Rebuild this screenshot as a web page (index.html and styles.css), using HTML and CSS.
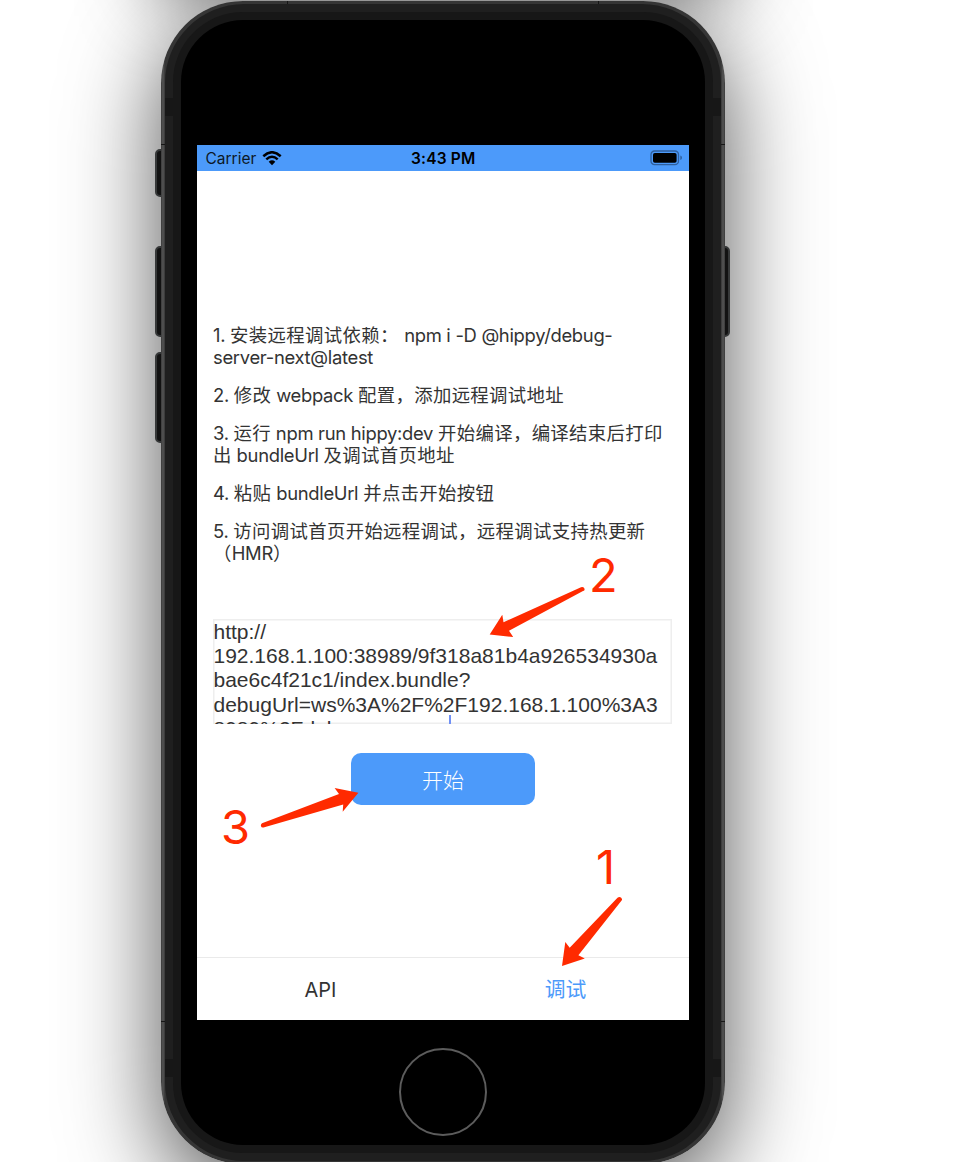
FILE: index.html
```html
<!DOCTYPE html>
<html lang="zh-CN">
<head>
<meta charset="utf-8">
<title>Hippy 调试</title>
<link rel="stylesheet" href="styles.css">
</head>
<body>
<main class="stage">
  <div class="glow"></div>
  <i class="key key-mute"></i><i class="key key-up"></i><i class="key key-down"></i><i class="key key-power"></i>
  <div class="phone">
    <i class="seam seam-tl"></i><i class="seam seam-tr"></i><i class="seam seam-bl"></i><i class="seam seam-br"></i><i class="seam seam-a"></i><i class="seam seam-b"></i>
    <div class="rim">
      <div class="ring">
        <i class="band band-tl"></i><i class="band band-tr"></i><i class="band band-bl"></i><i class="band band-br"></i>
        <div class="glass">
          <section class="screen">
            <header class="status">
              <div class="carrier"><span>Carrier</span>
                <svg class="wifi" viewBox="0 0 20 15"><path d="M1.3 5.2Q10-2.7 18.7 5.2M4.3 8.4Q10 3.2 15.7 8.4" fill="none" stroke="#000" stroke-width="2.5"/><path d="M6.7 10.7Q10 8 13.3 10.7L10 14.2Z"/></svg>
              </div>
              <div class="time">3:43 PM</div>
              <div class="power">
                <svg class="battery" viewBox="0 0 33 16"><rect x="1" y="1" width="27.5" height="13.6" rx="3.6" fill="none" stroke="#2f5f9d" stroke-width="1.3"/><rect x="3" y="3" width="23.6" height="9.7" rx="1.8"/><path d="M30.3 5.5q1.7.5 1.7 2.3t-1.7 2.3z" fill="#2f5f9d"/></svg>
              </div>
            </header>
            <div class="content">
              <div class="steps">
                <p><span class="en">1. </span>安装远程调试依赖： <span class="en">npm i -D @hippy/debug-<br>server-next@latest</span></p>
                <p><span class="en">2. </span>修改<span class="en"> webpack </span>配置，添加远程调试地址</p>
                <p><span class="en">3. </span>运行<span class="en"> npm run hippy:dev </span>开始编译，编译结束后打印<br>出<span class="en"> bundleUrl </span>及调试首页地址</p>
                <p><span class="en">4. </span>粘贴<span class="en"> bundleUrl </span>并点击开始按钮</p>
                <p><span class="en">5. </span>访问调试首页开始远程调试，远程调试支持热更新<br>（<span class="en">HMR</span>）</p>
              </div>
              <div class="url">http://<br>192.168.1.100:38989/9f318a81b4a926534930a<br>bae6c4f21c1/index.bundle?<br>debugUrl=ws%3A%2F%2F192.168.1.100%3A3<br>8989%2Fdebugger-proxy<i class="caret"></i></div>
              <button class="start">开始</button>
            </div>
            <nav class="tabs"><span class="tab">API</span><span class="tab active">调试</span></nav>
          </section>
          <div class="home"></div>
        </div>
      </div>
    </div>
  </div>
  <svg class="arrows" viewBox="0 0 972 1162"><path d="M489.7 634.5L502.3 614.7 503.5 622.3 581 587.2Q584 586.500 584.500 588.800T583 591L509 630.700 513.200 637ZM358.400 792.800L334.600 788 339 794 262 823.300Q260.500 824.500 261 826.200T263.500 827.500L343.200 804.500 342.700 811.800ZM562 966L565.300 942 569.700 947.800 617.500 897.800Q619.500 896 621.200 897.800T621.200 901L578.400 955.300 584.800 958.400Z"/></svg>
  <span class="mark mark-1">1</span><span class="mark mark-2">2</span><span class="mark mark-3">3</span>
</main>
</body>
</html>
```
FILE: styles.css
```css
* { box-sizing: border-box; }
body { margin: 0; background: #fff; font-family: Inter, "Noto Sans CJK SC", sans-serif; color: #333; }
.stage { position: relative; width: 972px; height: 1162px; overflow: hidden; padding: 1px 0 0 161px; }
.glow { position: absolute; left: 162px; top: -100px; width: 563px; height: 90px; box-shadow: 0 0 80px rgba(0,0,0,.7); }
.phone { position: relative; width: 564px; height: 1163px; padding: 3px 4px; border-radius: 82px; background: linear-gradient(90deg, #3a3a3a, #555 2px, #353535 4px, #353535 560px, #555 562px, #3a3a3a); box-shadow: 0 28px 94px rgba(0,0,0,.68); }
.rim { height: 100%; padding: 8px; border-radius: 79px; background: #1f1f1f; }
.ring { position: relative; height: 100%; padding: 8px; border-radius: 70px; background: #171717; }
.glass { height: 100%; padding: 125px 16px 0; border-radius: 62px; background: #000; display: flex; flex-direction: column; align-items: center; }
.band { position: absolute; width: 8px; height: 18px; background: #171717; }
.band-tl { left: -8px; top: 86px; }
.band-tr { right: -8px; top: 86px; }
.band-bl { left: -8px; bottom: 76px; }
.band-br { right: -8px; bottom: 76px; }
.seam { position: absolute; width: 4px; height: 1px; background: #161616; }
.seam-tl { left: 0; top: 143px; }
.seam-tr { right: 0; top: 143px; }
.seam-bl { left: 0; top: 1020px; }
.seam-br { right: 0; top: 1020px; }
.seam-a { left: 126px; top: 0; width: 1px; height: 3px; }
.seam-b { right: 126px; top: 0; width: 1px; height: 3px; }
.key { position: absolute; left: 155px; width: 12px; height: 91px; border-radius: 5px; background: #1c1c1c; border: 2px solid #505354; }
.key-mute { top: 149px; height: 48px; }
.key-up { top: 246px; }
.key-down { top: 352px; }
.key-power { top: 246px; left: 718px; }
.screen { width: 492px; height: 875px; flex: none; background: #fff; display: flex; flex-direction: column; }
.status { height: 26px; flex: none; background: #4c9afa; display: grid; grid-template-columns: 1fr 1fr 1fr; align-items: center; padding: 0 6px 0 8.500px; color: #000; font-size: 15.500px; }
.carrier { display: flex; align-items: center; gap: 6px; color: #0c1826; }
.wifi { width: 20px; height: 15px; }
.time { text-align: center; font-weight: 600; padding-right: 2px; letter-spacing: .2px; }
.power { display: flex; justify-content: flex-end; }
.battery { width: 33px; height: 16px; }
.content { flex: 1; padding: 153px 17px 0 16px; display: flex; flex-direction: column; align-items: center; }
.steps { width: 459px; height: 295px; font-size: 18.400px; line-height: 22px; letter-spacing: .34px; white-space: nowrap; }
.steps p { margin: 0 0 16px; }
.en { letter-spacing: -.3px; white-space: pre; }
.url { position: relative; width: 459px; height: 105px; padding: 1px 0 0 .5px; overflow: hidden; box-shadow: inset 0 0 0 1.500px #eee; font: 21px/24.200px "Liberation Sans", Arial, sans-serif; white-space: nowrap; }
.caret { position: absolute; left: 236px; top: 96px; width: 2px; height: 24px; background: #7090f5; }
.start { width: 184px; height: 52px; margin: 29px 0 0 1px; padding: 0 0 1px; border: 0; border-radius: 10px; background: #4c9afa; color: #fff; font: 300 21px "Noto Sans CJK SC", sans-serif; }
.tabs { height: 63px; border-top: 1px solid #eaeaea; display: flex; font-size: 20px; }
.tab { flex: 1; display: flex; align-items: center; justify-content: center; padding: 1px 0 0 1px; }
.active { color: #4c9afa; font-size: 20.800px; padding: 0 1px 2px 0; }
.home { flex: none; width: 88px; height: 88px; margin-top: 28px; border: 2.500px solid #5c5c5c; border-radius: 50%; }
.arrows { position: absolute; left: 0; top: 0; width: 972px; height: 1162px; fill: #ff2a00; }
.mark { position: absolute; color: #ff2a00; font-size: 47px; line-height: 56px; }
.mark-1 { left: 596px; top: 839px; }
.mark-2 { left: 589px; top: 547px; }
.mark-3 { left: 221px; top: 799px; }
```
